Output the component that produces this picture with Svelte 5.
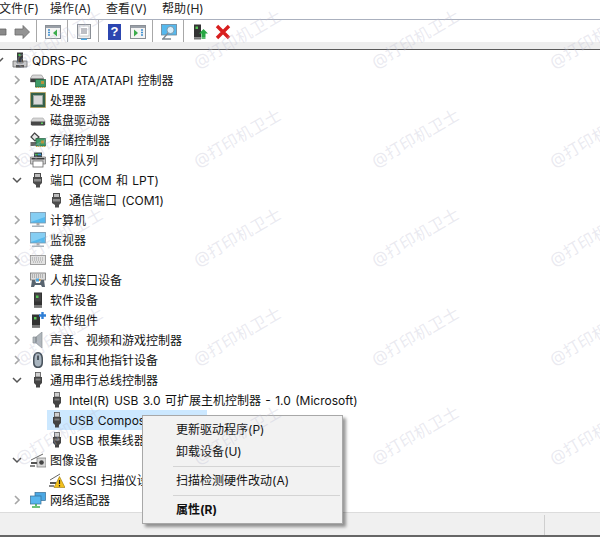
<script>
	const menus = ['文件(F)', '操作(A)', '查看(V)', '帮助(H)'];

	const rows = [
		{ label: 'QDRS-PC', icon: 'pc', level: 0, arrow: 'open' },
		{ label: 'IDE ATA/ATAPI 控制器', icon: 'ide', level: 1, arrow: 'closed' },
		{ label: '处理器', icon: 'cpu', level: 1, arrow: 'closed' },
		{ label: '磁盘驱动器', icon: 'disk', level: 1, arrow: 'closed' },
		{ label: '存储控制器', icon: 'storage', level: 1, arrow: 'closed' },
		{ label: '打印队列', icon: 'printer', level: 1, arrow: 'closed' },
		{ label: '端口 (COM 和 LPT)', icon: 'port', level: 1, arrow: 'open' },
		{ label: '通信端口 (COM1)', icon: 'port', level: 2 },
		{ label: '计算机', icon: 'monitor', level: 1, arrow: 'closed' },
		{ label: '监视器', icon: 'monitor', level: 1, arrow: 'closed' },
		{ label: '键盘', icon: 'keyboard', level: 1, arrow: 'closed' },
		{ label: '人机接口设备', icon: 'hid', level: 1, arrow: 'closed' },
		{ label: '软件设备', icon: 'soft', level: 1, arrow: 'closed' },
		{ label: '软件组件', icon: 'softplus', level: 1, arrow: 'closed' },
		{ label: '声音、视频和游戏控制器', icon: 'sound', level: 1, arrow: 'closed' },
		{ label: '鼠标和其他指针设备', icon: 'mouse', level: 1, arrow: 'closed' },
		{ label: '通用串行总线控制器', icon: 'usb', level: 1, arrow: 'open' },
		{ label: 'Intel(R) USB 3.0 可扩展主机控制器 - 1.0 (Microsoft)', icon: 'usb', level: 2 },
		{ label: 'USB Composite Device', icon: 'usb', level: 2, selected: true },
		{ label: 'USB 根集线器 (USB 3.0)', icon: 'usb', level: 2 },
		{ label: '图像设备', icon: 'camera', level: 1, arrow: 'open' },
		{ label: 'SCSI 扫描仪设备', icon: 'scanwarn', level: 2 },
		{ label: '网络适配器', icon: 'network', level: 1, arrow: 'closed' }
	];

	// watermark grid, left/top of each stamp
	const marks = [];
	for (const x of [11, 189, 367, 545]) {
		for (const y of [41, 140, 239, 338, 437]) marks.push({ x, y });
	}
</script>

{#snippet icon(name)}
	<svg class="ico" viewBox="0 0 16 16" width="16" height="16" aria-hidden="true">
		{#if name === 'pc'}
			<rect x="5" y="0.5" width="6" height="10" fill="#3c3c3c" />
			<rect x="6.5" y="2" width="2" height="2" fill="#4fc14f" />
			<path d="M1 9h4v2h6V9h4v6H1z" fill="#c9c9c9" stroke="#6b6b6b" stroke-width=".8" />
			<rect x="4" y="13" width="8" height="2.5" fill="#555" />
		{:else if name === 'ide'}
			<path d="M0.500 6l2-3h9l2 3v4h-13z" fill="#d8d8d8" stroke="#8a8a8a" stroke-width=".6" />
			<rect x="0.500" y="6.500" width="13" height="3.500" fill="#3f3f3f" />
			<rect x="5.500" y="7.500" width="10" height="7.500" fill="#3f9a67" stroke="#28603f" stroke-width=".7" />
			<rect x="11" y="9" width="3" height="3" fill="#b8913e" />
			<path d="M6 15.500h9" stroke="#d6a63a" stroke-dasharray="1 1" />
		{:else if name === 'cpu'}
			<rect x="0.500" y="0.500" width="15" height="15" fill="#35604a" stroke="#c89a32" stroke-dasharray="1 1" />
			<rect x="1" y="1" width="14" height="14" fill="#35604a" />
			<rect x="3.500" y="3.500" width="9" height="9" fill="#d9d9d9" stroke="#9aa59e" stroke-width=".8" />
		{:else if name === 'disk'}
			<path d="M1 9l2-3h10l2 3v4H1z" fill="#d6d6d6" stroke="#a5a5a5" stroke-width=".6" />
			<path d="M1 9.500h14v3l-1 1H2l-1-1z" fill="#474747" />
			<rect x="11" y="10.500" width="2" height="1.500" fill="#5ed05e" />
		{:else if name === 'storage'}
			<path d="M4.500 1L9 5 5 9 1 5z" fill="#e8e8e8" stroke="#444" stroke-width="1.200" />
			<path d="M0.500 10h6v4h-6z" fill="#666" />
			<rect x="6" y="6.500" width="9.500" height="7.500" fill="#3f9a67" stroke="#28603f" stroke-width=".7" />
			<rect x="11" y="8.500" width="3" height="3" fill="#b8913e" />
			<path d="M6 14.500h9" stroke="#d6a63a" stroke-dasharray="1 1" />
		{:else if name === 'printer'}
			<rect x="4" y="0.500" width="8" height="5" fill="#2f3a40" />
			<path d="M5 2.500h6" stroke="#3fb24f" stroke-width="1.500" />
			<path d="M8 2.500h3" stroke="#3d93dc" stroke-width="1.500" />
			<path d="M0.500 5h15v7h-15z" fill="#cfcfcf" stroke="#6b6b6b" stroke-width=".7" />
			<rect x="3" y="9" width="10" height="6" fill="#fff" stroke="#666" stroke-width=".8" />
			<rect x="1.500" y="6" width="13" height="1.500" fill="#3b3b3b" />
		{:else if name === 'port'}
			<path d="M4 1h7v4h1v6l-2 2v2.500H6V13l-3-2V5h1z" fill="#4c4c4c" />
			<rect x="5" y="2" width="5" height="3" fill="#bdbdbd" />
			<rect x="4" y="7" width="7" height="2.500" fill="#8c8c8c" />
		{:else if name === 'monitor'}
			<rect x="0.500" y="0.500" width="15" height="10.500" fill="#55b9ee" stroke="#7d98ad" stroke-width=".8" />
			<path d="M1 1h14v4L1 10z" fill="#a7dcf6" opacity=".6" />
			<rect x="6.500" y="11" width="3" height="2.500" fill="#a9a9a9" />
			<rect x="2" y="13.500" width="12" height="1.500" fill="#a8b2bb" />
		{:else if name === 'keyboard'}
			<rect x="0.500" y="3.500" width="15" height="9" fill="#e2e2e2" stroke="#8b8b8b" stroke-width=".8" />
			<path d="M2 6h12M2 8h12M3 10h10" stroke="#9d9d9d" stroke-dasharray="1 1" />
		{:else if name === 'hid'}
			<rect x="0.500" y="1" width="15" height="7" fill="#dcdcdc" stroke="#777" stroke-width=".8" />
			<path d="M2 3h12M2 5h12" stroke="#888" stroke-dasharray="1 1" />
			<path d="M1 15l1-7h3l1 3h4l1-3h3l1 7h-3l-1-2H5l-1 2z" fill="#58646f" />
			<rect x="6" y="6.500" width="3" height="3" fill="#4da6e0" />
			<rect x="9" y="7" width="1.500" height="2" fill="#e09a3a" />
		{:else if name === 'soft'}
			<rect x="4" y="0.500" width="8" height="15" fill="#333" />
			<rect x="5" y="1.500" width="6" height="8" fill="#444" />
			<rect x="6" y="3.500" width="2.500" height="2.500" fill="#56c556" />
			<rect x="4" y="13" width="8" height="2.500" fill="#777" />
		{:else if name === 'softplus'}
			<rect x="2" y="2.500" width="8" height="13" fill="#333" />
			<rect x="4" y="5" width="2.500" height="2.500" fill="#56c556" />
			<rect x="2" y="13" width="8" height="2.500" fill="#777" />
			<path d="M12.500 0v7M9 3.500h7" stroke="#2f7fd6" stroke-width="2.400" />
		{:else if name === 'sound'}
			<path d="M3 5h3l6-5v16l-6-5H3z" fill="#b0b7bc" stroke="#8a9197" stroke-width=".7" />
			<path d="M6 5v6" stroke="#70777c" stroke-width="1" />
		{:else if name === 'mouse'}
			<path d="M8 0c3.500 0 5 3 5 7v3c0 4-1.500 6-5 6s-5-2-5-6V7c0-4 1.500-7 5-7z" fill="#48525c" />
			<path d="M8 1.500c2 0 3.500 2 3.500 5.500v3c0 3-1.500 4.500-3.500 4.500S4.500 13 4.500 10V7c0-3.500 1.500-5.500 3.500-5.500z" fill="#a9b5bf" />
			<rect x="7" y="3.500" width="2" height="4.500" fill="#4b5660" />
		{:else if name === 'usb'}
			<rect x="5.500" y="0.500" width="5" height="4.500" fill="#d0d0d0" stroke="#555" stroke-width=".8" />
			<path d="M4 5h8v6l-2 2v2.500H6V13l-2-2z" fill="#444" />
			<rect x="5.500" y="6.500" width="5" height="2" fill="#7f7f7f" />
		{:else if name === 'camera'}
			<path d="M1 8L13 2" stroke="#666" stroke-width="1" />
			<rect x="7" y="6" width="9" height="9" fill="#d8d8d8" stroke="#777" stroke-width=".7" />
			<circle cx="11.500" cy="10.500" r="2.300" fill="#444" />
			<rect x="1" y="10" width="6" height="2" fill="#555" />
			<rect x="0" y="13" width="5" height="2" fill="#888" />
		{:else if name === 'scanwarn'}
			<path d="M1 8L11 2" stroke="#666" stroke-width="1" />
			<rect x="1" y="10" width="6" height="2" fill="#555" />
			<rect x="0" y="13" width="5" height="2" fill="#888" />
			<path d="M10.500 4.500L16 15.500H5z" fill="#f3c01c" stroke="#9b7a10" stroke-width=".6" />
			<path d="M10.500 8v4M10.500 13v1.500" stroke="#222" stroke-width="1.200" />
		{:else if name === 'network'}
			<rect x="5" y="0.500" width="10.500" height="8" fill="#4ba8e4" stroke="#356d94" stroke-width=".7" />
			<rect x="0.500" y="4" width="10.500" height="8" fill="#58b6ee" stroke="#356d94" stroke-width=".7" />
			<path d="M6 12v2M2 15h8" stroke="#3eae4e" stroke-width="1.600" />
		{/if}
	</svg>
{/snippet}

<div class="win">
	<nav class="menubar">
		{#each menus as m}
			<span class="menu">{m}</span>
		{/each}
	</nav>

	<div class="toolbar">
		<svg class="tool back" viewBox="0 0 16 16" width="16" height="16" aria-hidden="true">
			<path d="M1 8l6-6v3h8v6H7v3z" fill="#8a8a8a" stroke="#666" stroke-width=".8" />
		</svg>
		<svg class="tool" viewBox="0 0 16 16" width="16" height="16" aria-hidden="true">
			<path d="M15.500 8L9 1.500V5H1v6h8v3.500z" fill="#939393" stroke="#6a6a6a" stroke-width=".8" />
		</svg>
		<span class="sep"></span>
		<svg class="tool" viewBox="0 0 16 16" width="16" height="16" aria-hidden="true">
			<rect x="0.500" y="1.500" width="15" height="13" fill="#f4f4f4" stroke="#8a8f96" />
			<rect x="1" y="2" width="14" height="2" fill="#9aa0a8" />
			<path d="M3 6h2M3 8.500h2M3 11h2" stroke="#3f8fd0" stroke-width="1.300" />
			<path d="M12 5.500v7L8 9z" fill="#3cab4c" />
		</svg>
		<span class="sep"></span>
		<svg class="tool" viewBox="0 0 16 16" width="16" height="16" aria-hidden="true">
			<rect x="1.500" y="0.500" width="13" height="14" fill="#efefef" stroke="#8a8f96" />
			<rect x="3" y="2" width="10" height="10" fill="#fff" stroke="#a9adb3" stroke-width=".6" />
			<path d="M5 5h6M5 7h6M5 9h6" stroke="#7c8188" />
			<rect x="5" y="14.500" width="6" height="1.500" fill="#4ba8e4" />
		</svg>
		<span class="sep"></span>
		<span class="help">?</span>
		<svg class="tool" viewBox="0 0 16 16" width="16" height="16" aria-hidden="true">
			<rect x="0.500" y="1.500" width="15" height="13" fill="#f4f4f4" stroke="#8a8f96" />
			<rect x="1" y="2" width="14" height="2" fill="#9aa0a8" />
			<path d="M4 5.500v7L8 9z" fill="#3cab4c" />
			<path d="M11 6h2M11 8.500h2M11 11h2" stroke="#3f8fd0" stroke-width="1.300" />
		</svg>
		<span class="sep"></span>
		<svg class="tool" viewBox="0 0 16 16" width="16" height="16" aria-hidden="true">
			<rect x="0.500" y="0.500" width="15" height="10.500" fill="#55b9ee" stroke="#6d8496" stroke-width=".8" />
			<circle cx="9.500" cy="6" r="3.600" fill="#d7eefb" stroke="#7f9aab" />
			<path d="M7 9l-5 6h-1M2 15h8" stroke="#7e8a93" stroke-width="1.400" fill="none" />
		</svg>
		<span class="sep"></span>
		<svg class="tool user" viewBox="0 0 16 16" width="16" height="16" aria-hidden="true">
			<rect x="1" y="0.500" width="7" height="13" fill="#333" />
			<rect x="2.500" y="2.500" width="2.500" height="2.500" fill="#56c556" />
			<rect x="1" y="13.500" width="7" height="2" fill="#777" />
			<path d="M10.500 5l4.500 4.500h-2.500V13h-4V9.500H6z" fill="#27a844" />
			<path d="M8.500 14h4" stroke="#27a844" stroke-width="1.500" />
		</svg>
		<svg class="tool del" viewBox="0 0 16 16" width="16" height="16" aria-hidden="true">
			<path d="M2 2l12 12M14 2L2 14" stroke="#d81e1e" stroke-width="3.400" />
		</svg>
	</div>
	<div class="strip"></div>

	<ul class="tree">
		{#each rows as r}
			<li class="row lv{r.level}">
				<span class="arrow">
					{#if r.arrow === 'open'}
						<svg viewBox="0 0 10 10" width="10" height="10" aria-hidden="true"><path d="M1 3l4 4 4-4" fill="none" stroke="#555" stroke-width="1.500" /></svg>
					{:else if r.arrow === 'closed'}
						<svg viewBox="0 0 10 10" width="10" height="10" aria-hidden="true"><path d="M3 1l4 4-4 4" fill="none" stroke="#a6a6a6" stroke-width="1.600" /></svg>
					{/if}
				</span>
				<span class="cell" class:selected={r.selected}>
					{@render icon(r.icon)}
					<span class="label">{r.label}</span>
				</span>
			</li>
		{/each}
	</ul>

	<footer class="status">
		<span class="pane"></span>
	</footer>

	<div class="ctx">
		<div class="item">更新驱动程序(P)</div>
		<div class="item">卸载设备(U)</div>
		<div class="rule"></div>
		<div class="item">扫描检测硬件改动(A)</div>
		<div class="rule"></div>
		<div class="item strong">属性(R)</div>
	</div>

	{#each marks as m}
		<span class="mark" style="left: {m.x}px; top: {m.y}px">@打印机卫士</span>
	{/each}
</div>

<style>
	:global(body) { margin: 0; background: #fff; }

	.win {
		position: relative;
		width: 600px;
		height: 537px;
		overflow: hidden;
		display: flex;
		flex-direction: column;
		font-family: Inter, "Noto Sans CJK SC", sans-serif;
		font-size: 12px;
		color: #111;
		background: #fff;
	}

	.menubar {
		flex: none;
		display: flex;
		align-items: center;
		gap: 17px;
		margin-left: -1px;
		height: 14px;
		padding-bottom: 5px;
		border-bottom: 1px solid #aab0be;
		color: #222;
	}
	.menu { width: 39px; white-space: nowrap; }
	.menu:first-child { width: 34px; }

	.toolbar {
		height: 22px;
		flex: none;
		display: flex;
		align-items: center;
		padding-left: 14px;
	}
	.tool { flex: none; display: block; margin-top: 2px; }
	.back { position: absolute; left: -9px; top: 22px; }
	.sep { flex: none; width: 1px; height: 22px; background: #a8a8a8; margin: 0 8px 0 6px; }
	.help {
		flex: none;
		width: 13px;
		height: 16px;
		margin: 2px 9px 0 1px;
		background: #2c46b0;
		color: #fff;
		font: bold 13px/16px "Liberation Sans", sans-serif;
		text-align: center;
	}
	.user { margin-left: 1px; }
	.del { margin-left: 6px; }

	.strip {
		height: 7px;
		flex: none;
		background: #eeeeee;
		border-bottom: 1px solid #5a5a5a;
	}

	.tree {
		list-style: none;
		margin: 0;
		padding: 0;
		flex: 1;
		min-height: 0;
		word-spacing: 1px;
	}
	.row {
		height: 20px;
		display: flex;
		align-items: stretch;
		white-space: nowrap;
	}
	.lv0 { margin-left: -6px; }
	.lv1 { padding-left: 12px; }
	.lv2 { padding-left: 31px; }
	.arrow {
		flex: none;
		width: 18px;
		display: flex;
		align-items: center;
	}
	.cell {
		display: flex;
		align-items: center;
		gap: 4px;
	}
	.cell.selected {
		width: 160px;
		background: #cce8ff;
		margin-left: -2px;
		padding-left: 2px;
		box-sizing: border-box;
		overflow: hidden;
	}
	.ico { flex: none; display: block; }
	.label { position: relative; top: 1px; line-height: 20px; }

	.status {
		height: 22px;
		flex: none;
		margin-top: 3px;
		background: #f0f0f0;
		border-top: 1px solid #dcdcdc;
		border-bottom: 2px solid #666;
		display: flex;
		justify-content: flex-end;
	}
	.pane { width: 55px; border-left: 1px solid #cfcfcf; margin-top: 2px; }

	.ctx {
		position: absolute;
		left: 142px;
		top: 415px;
		width: 195px;
		padding: 3px 2px 2px;
		background: #f2f2f2;
		border: 1px solid #a8a8a8;
		box-shadow: 3px 3px 3px rgba(0, 0, 0, 0.4);
	}
	.item { height: 22px; line-height: 22px; padding-left: 31px; white-space: nowrap; }
	.strong { font-weight: 700; }
	.rule { height: 1px; margin: 3px 0 3px 28px; background: #d4d4d4; }

	.mark {
		position: absolute;
		width: 85px;
		text-align: center;
		line-height: 50px;
		height: 50px;
		margin-top: -24px;
		white-space: nowrap;
		font-size: 16px;
		letter-spacing: 0.5px;
		color: rgba(190, 190, 210, 0.32);
		transform: rotate(-30deg);
		pointer-events: none;
	}
</style>
